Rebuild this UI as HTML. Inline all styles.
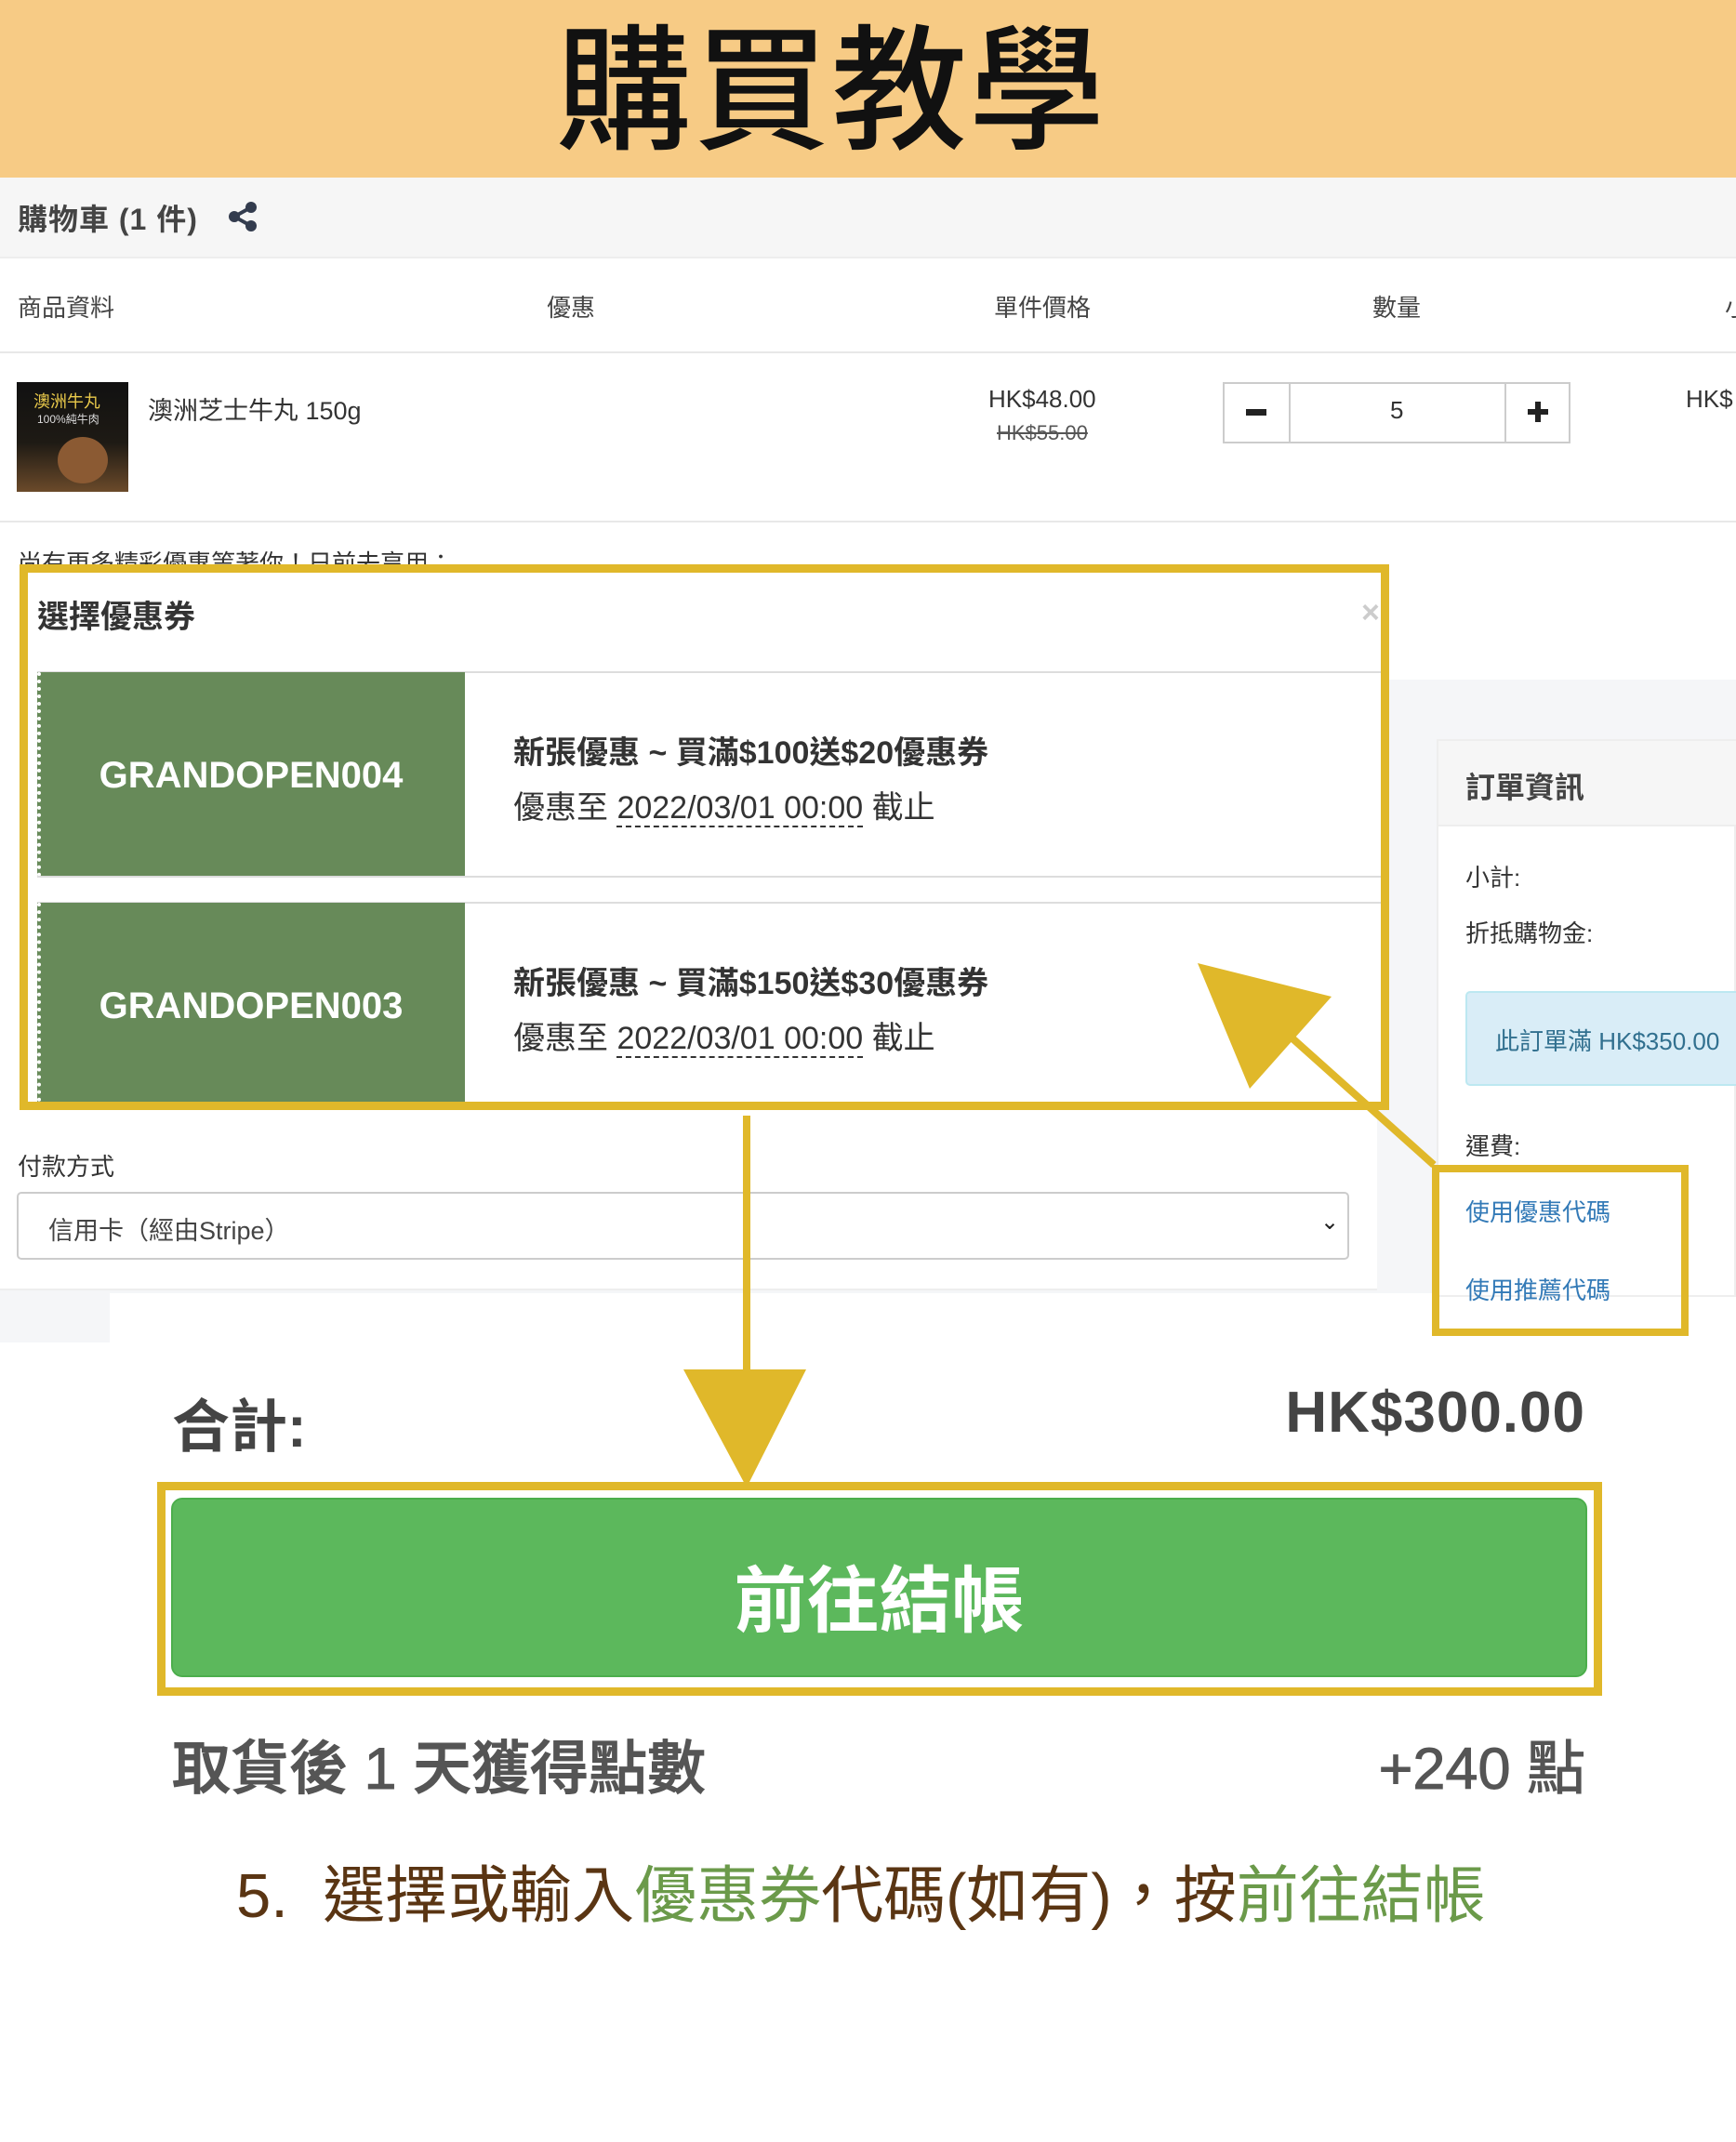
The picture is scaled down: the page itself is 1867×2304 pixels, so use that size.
<!DOCTYPE html>
<html><head><meta charset="utf-8">
<style>
*{margin:0;padding:0;box-sizing:border-box}
body{width:1867px;height:2304px;position:relative;background:#fff;font-family:"Liberation Sans","Noto Sans CJK TC",sans-serif;color:#333;overflow:hidden}
.a{position:absolute;white-space:nowrap}
</style></head><body>
<div class="a" style="left:0;top:0;width:1867px;height:191px;background:#f7cb85"></div>
<div class="a" style="left:598px;top:14px;font-size:146px;line-height:170px;color:#111;font-weight:500;letter-spacing:2px">購買教學</div>

<div class="a" style="left:0;top:191px;width:1867px;height:87px;background:#f6f6f6;border-bottom:2px solid #eee"></div>
<div class="a" style="left:19px;top:211px;font-size:32px;font-weight:bold;color:#444;letter-spacing:1px">購物車 (1 件)</div>
<svg class="a" style="left:244px;top:216px" width="34" height="34" viewBox="0 0 34 34"><circle cx="26" cy="7" r="6" fill="#333c4e"/><circle cx="8" cy="17" r="6" fill="#333c4e"/><circle cx="26" cy="27" r="6" fill="#333c4e"/><path d="M26 7L8 17L26 27" stroke="#333c4e" stroke-width="4" fill="none"/></svg>

<div class="a" style="left:19px;top:311px;font-size:26px;color:#444">商品資料</div>
<div class="a" style="left:588px;top:311px;font-size:26px;color:#444">優惠</div>
<div class="a" style="left:1069px;top:311px;font-size:26px;color:#444">單件價格</div>
<div class="a" style="left:1476px;top:311px;font-size:26px;color:#444">數量</div>
<div class="a" style="left:1855px;top:311px;font-size:26px;color:#444">小</div>
<div class="a" style="left:0;top:378px;width:1867px;height:2px;background:#e8e8e8"></div>

<div class="a" style="left:18px;top:411px;width:120px;height:118px;background:linear-gradient(180deg,#111 0%,#1e1a14 55%,#6b4a2a 100%)"></div>
<div class="a" style="left:36px;top:418px;font-size:18px;color:#e8c84a">澳洲牛丸</div>
<div class="a" style="left:40px;top:442px;font-size:12px;color:#ddd">100%純牛肉</div>
<div class="a" style="left:62px;top:470px;width:54px;height:50px;border-radius:50%;background:#8b5a33"></div>
<div class="a" style="left:159px;top:420px;font-size:27px;color:#333">澳洲芝士牛丸 150g</div>
<div class="a" style="left:1063px;top:414px;font-size:26px;color:#333">HK$48.00</div>
<div class="a" style="left:1072px;top:453px;font-size:22px;color:#555;text-decoration:line-through">HK$55.00</div>
<div class="a" style="left:1315px;top:411px;width:374px;height:66px;border:2px solid #ccc"></div>
<div class="a" style="left:1386px;top:411px;width:2px;height:66px;background:#ccc"></div>
<div class="a" style="left:1618px;top:411px;width:2px;height:66px;background:#ccc"></div>
<div class="a" style="left:1340px;top:440px;width:22px;height:7px;background:#222"></div>
<div class="a" style="left:1643px;top:440px;width:22px;height:6px;background:#222"></div>
<div class="a" style="left:1651px;top:432px;width:6px;height:22px;background:#222"></div>
<div class="a" style="left:1495px;top:426px;font-size:26px;color:#333">5</div>
<div class="a" style="left:1813px;top:414px;font-size:26px;color:#333">HK$</div>
<div class="a" style="left:0;top:560px;width:1867px;height:2px;background:#e8e8e8"></div>
<div class="a" style="left:19px;top:586px;font-size:26px;color:#333;height:22px;overflow:hidden">尚有更多精彩優惠等著你！日前去享用：</div>

<div class="a" style="left:0;top:731px;width:1867px;height:660px;background:#f5f6f8"></div>
<div class="a" style="left:0;top:731px;width:1481px;height:657px;background:#fff;border-bottom:2px solid #eee"></div>
<div class="a" style="left:0;top:1390px;width:118px;height:54px;background:#f5f6f8"></div>

<div class="a" style="left:1545px;top:795px;width:322px;height:600px;background:#fff;border:2px solid #eee"></div>
<div class="a" style="left:1547px;top:797px;width:320px;height:92px;background:#f6f6f6;border-bottom:2px solid #eee"></div>
<div class="a" style="left:1576px;top:822px;font-size:32px;font-weight:bold;color:#444">訂單資訊</div>
<div class="a" style="left:1576px;top:924px;font-size:26px;color:#333">小計:</div>
<div class="a" style="left:1576px;top:984px;font-size:26px;color:#333">折抵購物金:</div>
<div class="a" style="left:1576px;top:1066px;width:300px;height:102px;background:#d9edf7;border:2px solid #bce8f1;border-radius:5px"></div>
<div class="a" style="left:1608px;top:1100px;font-size:26px;color:#31708f">此訂單滿 HK$350.00</div>
<div class="a" style="left:1576px;top:1213px;font-size:26px;color:#333">運費:</div>
<div class="a" style="left:1576px;top:1284px;font-size:26px;color:#337ab7">使用優惠代碼</div>
<div class="a" style="left:1576px;top:1368px;font-size:26px;color:#337ab7">使用推薦代碼</div>
<div class="a" style="left:1540px;top:1253px;width:276px;height:184px;border:8px solid #e0b82a"></div>

<div class="a" style="left:19px;top:1235px;font-size:26px;color:#333">付款方式</div>
<div class="a" style="left:18px;top:1282px;width:1433px;height:73px;border:2px solid #ccc;border-radius:5px;background:#fff"></div>
<div class="a" style="left:52px;top:1302px;font-size:27px;color:#444">信用卡（經由Stripe）</div>
<div class="a" style="left:1420px;top:1300px;font-size:24px;color:#222">⌄</div>

<div class="a" style="left:21px;top:607px;width:1473px;height:587px;background:#fff;border:9px solid #e0b82a"></div>
<div class="a" style="left:40px;top:636px;font-size:34px;font-weight:bold;color:#333">選擇優惠券</div>
<div class="a" style="left:1464px;top:640px;font-size:34px;font-weight:bold;color:#ccc">×</div>
<div class="a" style="left:40px;top:722px;width:1445px;height:2px;background:#ddd"></div>
<div class="a" style="left:40px;top:723px;width:460px;height:220px;background:#678a59;border-left:4px dotted #fff"></div>
<div class="a" style="left:40px;top:812px;width:460px;text-align:center;font-size:40px;font-weight:bold;color:#fff">GRANDOPEN004</div>
<div class="a" style="left:552px;top:782px;font-size:34px;font-weight:bold;color:#333">新張優惠 ~ 買滿$100送$20優惠券</div>
<div class="a" style="left:552px;top:841px;font-size:34px;color:#333">優惠至 <span style="border-bottom:2px dashed #333">2022/03/01 00:00</span> 截止</div>
<div class="a" style="left:40px;top:942px;width:1445px;height:2px;background:#ddd"></div>
<div class="a" style="left:40px;top:970px;width:1445px;height:2px;background:#ddd"></div>
<div class="a" style="left:40px;top:971px;width:460px;height:214px;background:#678a59;border-left:4px dotted #fff"></div>
<div class="a" style="left:40px;top:1060px;width:460px;text-align:center;font-size:40px;font-weight:bold;color:#fff">GRANDOPEN003</div>
<div class="a" style="left:552px;top:1030px;font-size:34px;font-weight:bold;color:#333">新張優惠 ~ 買滿$150送$30優惠券</div>
<div class="a" style="left:552px;top:1089px;font-size:34px;color:#333">優惠至 <span style="border-bottom:2px dashed #333">2022/03/01 00:00</span> 截止</div>

<div class="a" style="left:185px;top:1484px;font-size:62px;font-weight:bold;color:#444">合計:</div>
<div class="a" style="right:162px;top:1484px;font-size:62px;font-weight:bold;color:#444;letter-spacing:1px">HK$300.00</div>
<div class="a" style="left:169px;top:1594px;width:1554px;height:230px;border:9px solid #e0b82a"></div>
<div class="a" style="left:184px;top:1611px;width:1523px;height:193px;background:#5cb85c;border:2px solid #4cae4c;border-radius:12px"></div>
<div class="a" style="left:184px;top:1660px;width:1523px;text-align:center;font-size:78px;font-weight:bold;color:#fff">前往結帳</div>
<div class="a" style="left:185px;top:1852px;font-size:63px;color:#555;font-weight:500;-webkit-text-stroke:1px #555">取貨後 1 天獲得點數</div>
<div class="a" style="right:162px;top:1852px;font-size:63px;color:#555;-webkit-text-stroke:1px #555">+240 點</div>
<div class="a" style="left:254px;top:1985px;font-size:67px;color:#5a3513">5.&nbsp; 選擇或輸入<span style="color:#6b9a4a">優惠券</span>代碼(如有)，按<span style="color:#6b9a4a">前往結帳</span></div>

<svg class="a" style="left:0;top:0" width="1867" height="2304">
<line x1="803" y1="1200" x2="803" y2="1480" stroke="#e0b82a" stroke-width="8"/>
<polygon points="735,1473 867,1473 803,1600" fill="#e0b82a"/>
<line x1="1542" y1="1253" x2="1380" y2="1108" stroke="#e0b82a" stroke-width="8"/>
<polygon points="1288,1036 1432,1072 1344,1171" fill="#e0b82a"/>
</svg>
</body></html>
